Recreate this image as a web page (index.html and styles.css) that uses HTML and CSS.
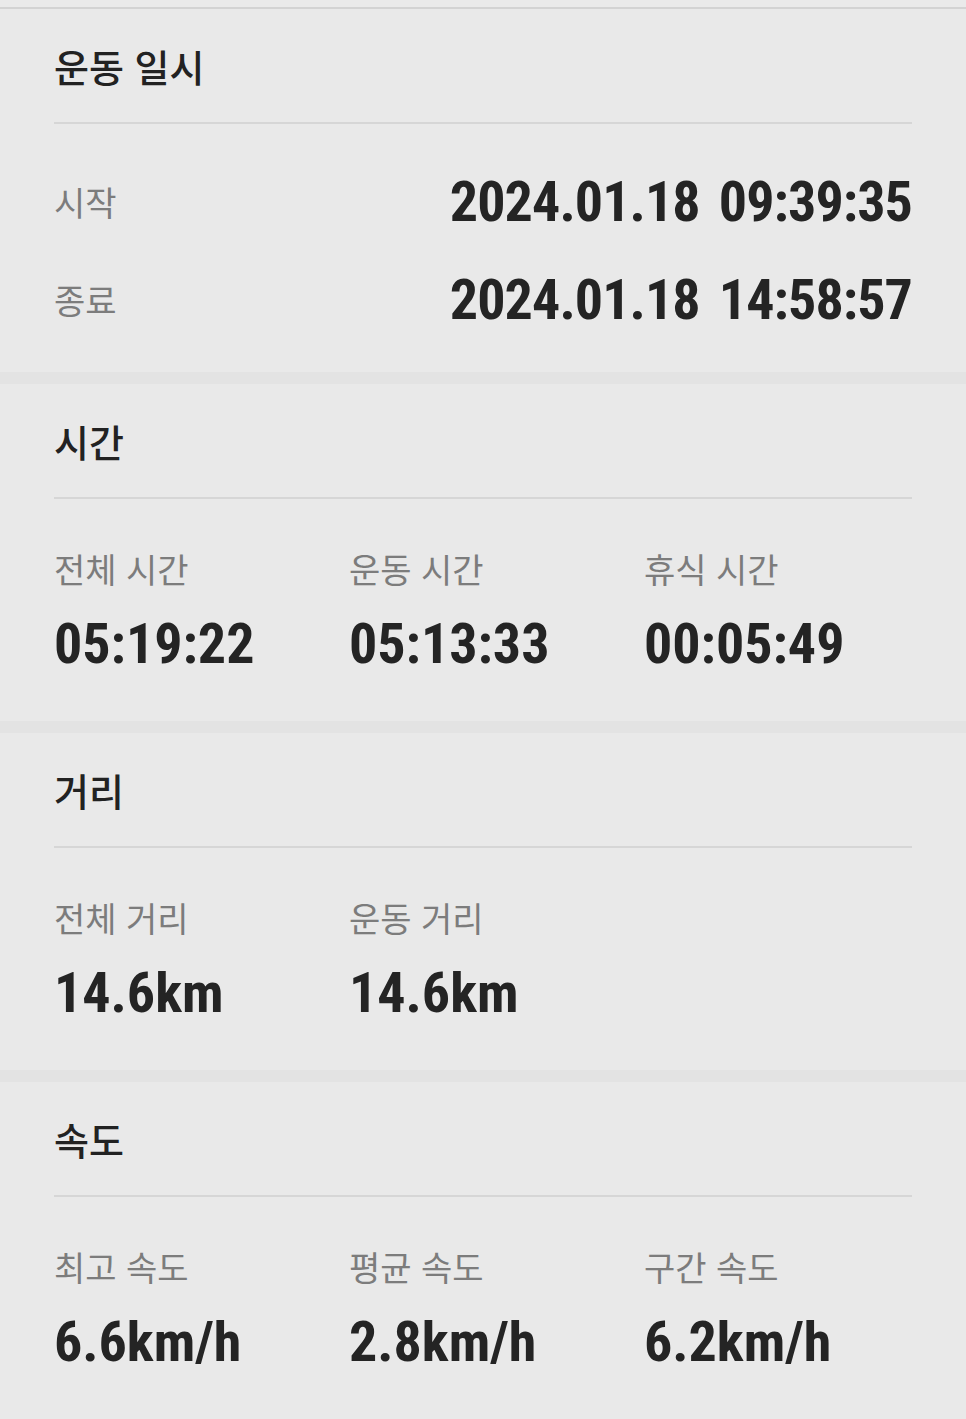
FILE: index.html
```html
<!DOCTYPE html>
<html lang="ko">
<head>
    <meta charset="UTF-8">
    <meta name="viewport" content="width=device-width, initial-scale=1.0">
    <title>운동 기록</title>
    <link rel="stylesheet" href="styles.css">
</head>
<body>
    <div class="top-edge"></div>

    <!-- 운동 일시 -->
    <section class="card">
        <h2 class="card-title">운동 일시</h2>
        <div class="period">
            <div class="period-row">
                <span class="label">시작</span>
                <span class="value date">2024.01.18 09:39:35</span>
            </div>
            <div class="period-row">
                <span class="label">종료</span>
                <span class="value date">2024.01.18 14:58:57</span>
            </div>
        </div>
    </section>

    <!-- 시간 -->
    <section class="card">
        <h2 class="card-title">시간</h2>
        <div class="stats">
            <div class="stat">
                <span class="label">전체 시간</span>
                <span class="value">05:19:22</span>
            </div>
            <div class="stat">
                <span class="label">운동 시간</span>
                <span class="value">05:13:33</span>
            </div>
            <div class="stat">
                <span class="label">휴식 시간</span>
                <span class="value">00:05:49</span>
            </div>
        </div>
    </section>

    <!-- 거리 -->
    <section class="card">
        <h2 class="card-title">거리</h2>
        <div class="stats">
            <div class="stat">
                <span class="label">전체 거리</span>
                <span class="value">14.6km</span>
            </div>
            <div class="stat">
                <span class="label">운동 거리</span>
                <span class="value">14.6km</span>
            </div>
        </div>
    </section>

    <!-- 속도 -->
    <section class="card">
        <h2 class="card-title">속도</h2>
        <div class="stats">
            <div class="stat">
                <span class="label">최고 속도</span>
                <span class="value">6.6km/h</span>
            </div>
            <div class="stat">
                <span class="label">평균 속도</span>
                <span class="value">2.8km/h</span>
            </div>
            <div class="stat">
                <span class="label">구간 속도</span>
                <span class="value">6.2km/h</span>
            </div>
        </div>
    </section>
</body>
</html>
```

FILE: styles.css
```css
body {
    margin: 0;
    padding: 0;
    background: #e3e3e3;
    font-family: "Noto Sans CJK KR", "Noto Sans", sans-serif;
}
.top-edge {
    height: 7px;
    background: #eaeaea;
    border-bottom: 2px solid #d3d3d3;
}
.card {
    background: #e9e9e9;
    padding: 0 54px;
}
.card + .card {
    margin-top: 12px;
}
.card-title {
    margin: 0;
    height: 113px;
    display: flex;
    align-items: center;
    font-size: 38px;
    font-weight: 500;
    line-height: 1;
    color: #222;
    border-bottom: 2px solid #d6d6d6;
}
.label {
    font-size: 34px;
    line-height: 44px;
    color: #7c7c7c;
}
.value {
    font-family: "Liberation Sans Narrow", "Roboto Condensed", "DejaVu Sans Condensed", sans-serif;
    font-weight: 700;
    font-size: 56px;
    line-height: 60px;
    color: #242424;
}
.period {
    padding: 29px 0 23px;
}
.period-row {
    height: 98px;
    display: flex;
    justify-content: space-between;
    align-items: center;
}
.date {
    letter-spacing: -0.9px;
    word-spacing: 7px;
}
.stats {
    display: grid;
    grid-template-columns: repeat(3, 295px);
    padding: 48px 0 47px;
}
.stat {
    display: flex;
    flex-direction: column;
    gap: 23px;
}
```
